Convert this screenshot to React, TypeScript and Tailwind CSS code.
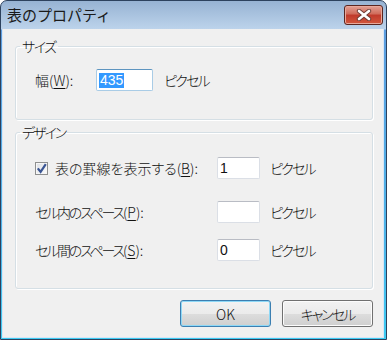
import React from "react";

const U = ({ children }: { children: string }) => (
  <span className="underline underline-offset-[2px]">{children}</span>
);

const TextBox = ({
  value,
  width,
  focused
}: {
  value?: string;
  width: number;
  focused?: boolean;
}) => (
  <div
    className={
      "h-[22px] flex items-center pl-[2px] bg-white rounded-[2px] border font-['Liberation_Sans',sans-serif] text-[14px] " +
      (focused
        ? "border-[#a9cce6] border-t-[#5e95c0]"
        : "border-[#dbdfe6] border-t-[#b9bcc4]")
    }
    style={{ width }}
  >
    {focused ? (
      <span className="bg-[#3399ff] text-white px-px leading-[15px]">{value}</span>
    ) : (
      <span className="leading-[15px]">{value}</span>
    )}
  </div>
);

const Button = ({ label, isDefault }: { label: string; isDefault?: boolean }) => (
  <div
    className={
      "w-[91px] h-[27px] rounded-[3px] border flex items-center justify-center bg-[linear-gradient(to_bottom,#f2f2f2_0%,#ebebeb_50%,#dddddd_50%,#cfcfcf_100%)] " +
      (isDefault
        ? "border-[#3c7fb1] shadow-[inset_0_0_0_1px_#8ed8f6]"
        : "border-[#707070] shadow-[inset_0_0_0_1px_#fcfcfc] tracking-[-2px]")
    }
  >
    {label}
  </div>
);

const CloseIcon = () => (
  <svg width="16" height="12" viewBox="0 0 16 12">
    <path d="M3 2 L13 10 M13 2 L3 10" stroke="#6d3a33" strokeWidth="4.4" strokeLinecap="round" />
    <path d="M3 2 L13 10 M13 2 L3 10" stroke="#ffffff" strokeWidth="2.6" strokeLinecap="round" />
  </svg>
);

const App = () => {
  return (
    <div className="w-[387px] h-[340px] font-['Noto_Sans_CJK_JP','Noto_Sans',sans-serif] font-light text-[14px] leading-[16px] text-[#111] select-none [font-feature-settings:'palt']">
      <div className="h-full flex flex-col rounded-t-[7px] border border-[#2d425e] bg-[linear-gradient(to_bottom,#97b3d3_0px,#bcd3eb_28px,#5c9de0_29px,#4bb6ea_250px,#3ccbf3_100%)]">
        {/* title bar */}
        <div className="h-[28px] flex justify-between">
          <div className="pl-[6px] flex items-center font-normal text-[15px] leading-[18px] text-[#1a1a1a] [font-feature-settings:normal]">
            表のプロパティ
          </div>
          <div className="mt-[4px] mr-[3px] w-[39px] h-[20px] rounded-[3px] border border-[#5b2620] flex items-center justify-center bg-[linear-gradient(to_bottom,#e3a195_0%,#cf6a59_45%,#c0392b_50%,#d2583d_100%)] shadow-[inset_0_0_0_1px_#e8a99c]">
            <CloseIcon />
          </div>
        </div>

        {/* client area */}
        <div className="flex-1 ml-[1px] mr-[2px] mb-[1px] border-x border-b border-[#d9e6f4] bg-[#f0f0f0] flex flex-col">
          <fieldset className="mt-[9px] ml-[12px] mr-[10px] border border-[#d5dfe5] rounded-[3px] shadow-[inset_1px_1px_0_#ffffff,1px_1px_0_#ffffff] pt-[15px] pb-[28px]">
            <legend className="ml-[4px] px-[2px] tracking-[-1.5px]">サイズ</legend>
            <div className="flex items-center pl-[19px]">
              <div className="w-[61px]">
                幅(<U>W</U>):
              </div>
              <TextBox value="435" width={57} focused />
              <div className="ml-[11px] tracking-[-1.8px]">ピクセル</div>
            </div>
          </fieldset>

          <fieldset className="mt-[4px] ml-[12px] mr-[10px] border border-[#d5dfe5] rounded-[3px] shadow-[inset_1px_1px_0_#ffffff,1px_1px_0_#ffffff] pt-[17px] pb-[27px]">
            <legend className="ml-[4px] px-[2px] tracking-[-2px]">デザイン</legend>
            <div className="flex items-center pl-[19px]">
              <div className="w-[182px] flex items-center">
                <div className="w-[13px] h-[13px] border border-[#8e8f8f] bg-[linear-gradient(135deg,#dcdfe4,#fcfcfc)] shadow-[inset_0_0_0_1px_#f6f6f6] flex items-center justify-center">
                  <svg width="11" height="11" viewBox="0 0 11 11">
                    <path d="M1.8 5.4 L4.6 8.8 L9.8 1.2" fill="none" stroke="#3a5593" strokeWidth="2.2" />
                  </svg>
                </div>
                <div className="ml-[7px]">
                  表の罫線を表示する(<U>B</U>):
                </div>
              </div>
              <TextBox value="1" width={43} />
              <div className="ml-[10px] tracking-[-1.8px]">ピクセル</div>
            </div>

            <div className="flex items-center mt-[22px] pl-[19px]">
              <div className="w-[182px]">
                <span className="tracking-[-2.2px]">セル内のスペース</span>(<U>P</U>):
              </div>
              <TextBox width={43} />
              <div className="ml-[10px] tracking-[-1.8px]">ピクセル</div>
            </div>

            <div className="flex items-center mt-[16px] pl-[19px]">
              <div className="w-[182px]">
                <span className="tracking-[-2.2px]">セル間のスペース</span>(<U>S</U>):
              </div>
              <TextBox value="0" width={43} />
              <div className="ml-[10px] tracking-[-1.8px]">ピクセル</div>
            </div>
          </fieldset>

          <div className="mt-[11px] pr-[10px] flex justify-end gap-[11px]">
            <Button label="OK" isDefault />
            <Button label="キャンセル" />
          </div>
        </div>
      </div>
    </div>
  );
};

export default App;
